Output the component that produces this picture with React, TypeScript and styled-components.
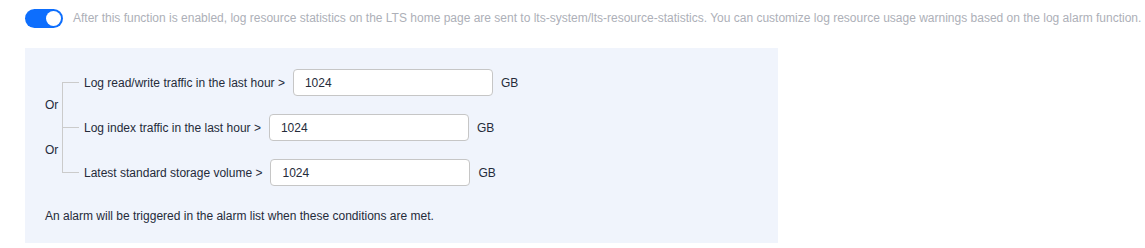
import React, { useState } from 'react';
import styled, { createGlobalStyle } from 'styled-components';

const GlobalStyle = createGlobalStyle`
  body {
    margin: 0;
    background: #fff;
    font-family: 'Liberation Sans', Arial, sans-serif;
    font-size: 12px;
    color: #252b3a;
  }
`;

const Page = styled.div`
  padding: 8px 25px;
`;

const Header = styled.div`
  display: flex;
  align-items: center;
  gap: 10px;
  height: 20px;
`;

const Switch = styled.button<{ $on: boolean }>`
  position: relative;
  flex-shrink: 0;
  width: 38px;
  height: 19px;
  padding: 0;
  border: none;
  border-radius: 10px;
  background: ${(p) => (p.$on ? '#0d6efd' : '#adb0b8')};
  cursor: pointer;

  &::after {
    content: '';
    position: absolute;
    top: 2px;
    left: ${(p) => (p.$on ? '21px' : '2px')};
    width: 15px;
    height: 15px;
    border-radius: 50%;
    background: #fff;
  }
`;

const Hint = styled.span`
  color: #adb0b8;
  line-height: 18px;
  white-space: nowrap;
`;

const Panel = styled.div`
  margin-top: 20px;
  width: 713px;
  padding: 21px 20px 18px;
  background: #f0f4fc;
`;

const Conditions = styled.div`
  display: grid;
  grid-template-columns: 17px auto;
  grid-template-rows: 27px 18px 27px 18px 27px;
`;

const OrLabel = styled.div<{ $row: number }>`
  grid-column: 1;
  grid-row: ${(p) => p.$row};
  display: flex;
  align-items: center;
  line-height: 14px;
`;

const Trunk = styled.div`
  grid-column: 2;
  grid-row: 1 / 6;
  margin: 13px 0 14px;
  width: 0;
  border-left: 1px solid #cbcbcb;
`;

const Branch = styled.div<{ $row: number }>`
  grid-column: 2;
  grid-row: ${(p) => p.$row};
  display: flex;
  align-items: center;
`;

const Connector = styled.span`
  flex-shrink: 0;
  width: 17px;
  height: 1px;
  margin-right: 5px;
  background: #cbcbcb;
`;

const Label = styled.span`
  margin-right: 8px;
  white-space: nowrap;
`;

const Input = styled.input`
  box-sizing: border-box;
  width: 200px;
  height: 27px;
  padding: 0 11px;
  border: 1px solid #c6c6c6;
  border-radius: 4px;
  background: #fff;
  font-family: inherit;
  font-size: 12px;
  color: #252b3a;
  outline: none;
`;

const Unit = styled.span`
  margin-left: 8px;
`;

const Note = styled.p`
  margin: 21px 0 0;
  line-height: 18px;
`;

const conditions = [
  'Log read/write traffic in the last hour >',
  'Log index traffic in the last hour >',
  'Latest standard storage volume >',
];

export default function App() {
  const [enabled, setEnabled] = useState(true);
  const [values, setValues] = useState(['1024', '1024', '1024']);

  return (
    <Page>
      <GlobalStyle />
      <Header>
        <Switch $on={enabled} onClick={() => setEnabled(!enabled)} aria-label="toggle" />
        <Hint>
          After this function is enabled, log resource statistics on the LTS home page are sent to
          lts-system/lts-resource-statistics. You can customize log resource usage warnings based on
          the log alarm function.
        </Hint>
      </Header>
      <Panel>
        <Conditions>
          <Trunk />
          <OrLabel $row={2}>Or</OrLabel>
          <OrLabel $row={4}>Or</OrLabel>
          {conditions.map((text, i) => (
            <Branch key={text} $row={i * 2 + 1}>
              <Connector />
              <Label>{text}</Label>
              <Input
                value={values[i]}
                onChange={(e) => {
                  const next = [...values];
                  next[i] = e.target.value;
                  setValues(next);
                }}
              />
              <Unit>GB</Unit>
            </Branch>
          ))}
        </Conditions>
        <Note>An alarm will be triggered in the alarm list when these conditions are met.</Note>
      </Panel>
    </Page>
  );
}
